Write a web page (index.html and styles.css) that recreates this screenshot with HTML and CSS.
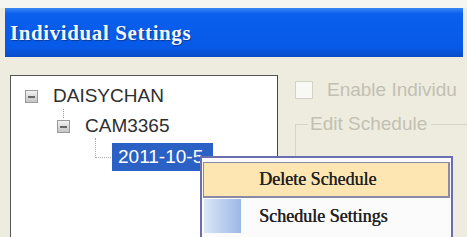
FILE: index.html
```html
<!DOCTYPE html>
<html lang="en">
<head>
  <meta charset="UTF-8">
  <title>Individual Settings</title>
  <link rel="stylesheet" href="styles.css">
</head>
<body>
  <div class="janela">
    <div class="titulo">Individual Settings</div>
    <div class="conteudo">
      <!-- arvore de cameras -->
      <div class="arvore">
        <div class="no no-raiz">
          <span class="caixa"></span>
          <span class="rotulo">DAISYCHAN</span>
        </div>
        <div class="no no-cam">
          <span class="caixa"></span>
          <span class="rotulo">CAM3365</span>
        </div>
        <div class="no no-data">
          <span class="rotulo selecionado">2011-10-5</span>
        </div>
      </div>

      <!-- opcoes (desabilitadas) -->
      <div class="opcoes">
        <label class="check">
          <span class="quadrado"></span>
          Enable Individu
        </label>
        <div class="grupo">
          <span class="legenda">Edit Schedule</span>
        </div>
      </div>
    </div>
  </div>

  <div class="menu">
    <div class="item ativo"><span class="icone"></span><span class="texto">Delete Schedule</span></div>
    <div class="item"><span class="icone"></span><span class="texto">Schedule Settings</span></div>
  </div>
</body>
</html>
```

FILE: styles.css
```css
body {
  margin: 0;
  width: 467px;
  height: 237px;
  overflow: hidden;
  background: #f5f5f2;
  position: relative;
  font-family: "Liberation Sans", Arial, sans-serif;
}
.janela {
  margin-top: 8px;
  background: #eeecdf;
  height: 229px;
}
.titulo {
  margin: 0 4px 0 5px;
  height: 49px;
  box-sizing: border-box;
  padding: 13px 0 0 5px;
  background: linear-gradient(#3c86f4 0%, #0a5fec 12%, #075ae8 80%, #0a4cc8 100%);
  color: #f4f6ff;
  font-family: "Liberation Serif", "Times New Roman", serif;
  font-weight: bold;
  font-size: 21px;
  letter-spacing: 0.6px;
  text-shadow: 1px 1px 1px #0a3a9a;
}
.conteudo {
  display: flex;
  padding: 18px 0 0 10px;
}
.arvore {
  width: 268px;
  height: 170px;
  border: 1px solid #555;
  border-right-color: #444;
  background: #fff;
  padding-top: 5px;
  box-sizing: border-box;
  flex: none;
}
.no {
  position: relative;
  display: flex;
  align-items: center;
  height: 30px;
  color: #2e2e2e;
  font-size: 19px;
}
.no-raiz { padding-left: 14px; }
.no-cam { padding-left: 46px; }
.no-data { padding-left: 101px; height: 32px; }
.caixa {
  width: 11px;
  height: 11px;
  border: 1px solid #9a9a9a;
  background: linear-gradient(#f2f2f2, #c4c4c4);
  position: relative;
  margin-right: 15px;
}
.caixa::after {
  content: "";
  position: absolute;
  left: 2px;
  right: 2px;
  top: 5px;
  height: 2px;
  background: #666;
}
/* linhas pontilhadas da arvore */
.no-cam::before {
  content: "";
  position: absolute;
  left: 52px;
  top: -2px;
  height: 9px;
  border-left: 1px dotted #999;
}
.no-data::before {
  content: "";
  position: absolute;
  left: 84px;
  top: -3px;
  width: 15px;
  height: 19px;
  border-left: 1px dotted #aaa;
  border-bottom: 1px dotted #aaa;
}
.selecionado {
  background: #2b60c4;
  color: #fff;
  padding: 3px 10px 3px 6px;
  line-height: 22px;
}
.opcoes {
  flex: 1;
  padding: 5px 0 0 17px;
  color: #c2c0b2;
  font-size: 19px;
  white-space: nowrap;
  overflow: hidden;
}
.check {
  display: flex;
  align-items: center;
  gap: 14px;
  height: 20px;
}
.quadrado {
  width: 16px;
  height: 16px;
  border: 1px solid #d4d2c6;
  background: #f8f8f4;
  flex: none;
}
.grupo {
  margin-top: 14px;
  height: 120px;
  border-left: 1px solid #d6d4c8;
  border-top: 1px solid #d6d4c8;
  position: relative;
  top: 10px;
}
.legenda {
  position: absolute;
  left: 12px;
  top: -12px;
  background: #eeecdf;
  padding: 0 4px 0 2px;
  line-height: 22px;
}
.menu {
  position: absolute;
  left: 200px;
  top: 156px;
  width: 253px;
  height: 90px;
  box-sizing: border-box;
  border: 2px solid #6a6eae;
  border-bottom: none;
  background: #fbfbfb;
  padding: 4px 1px 0 1px;
  font-family: "Liberation Serif", "Times New Roman", serif;
  font-size: 18px;
  color: #222;
}
.item {
  display: flex;
  align-items: center;
  height: 36px;
  box-sizing: border-box;
  border: 1px solid transparent;
}
.item.ativo {
  background: #fde6b2;
  border-color: #8a8aa6;
  border-width: 1px 2px 2px 1px;
}
.icone {
  width: 37px;
  align-self: stretch;
  background: linear-gradient(90deg, #dbe6f8, #9cb8e6);
  margin-right: 18px;
  flex: none;
}
.item.ativo .icone { background: none; }
.texto {
  text-shadow: 0.4px 0 0 #222;
}
```
